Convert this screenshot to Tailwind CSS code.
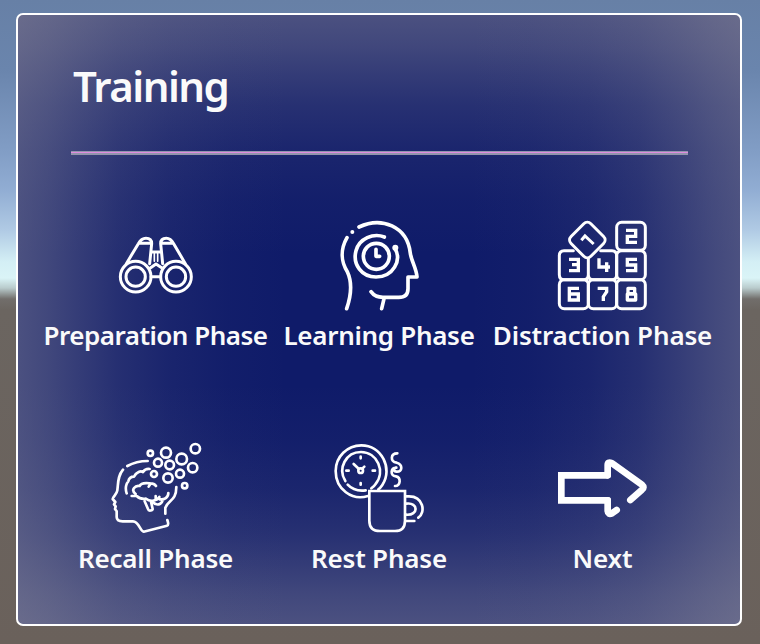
<!DOCTYPE html>
<html lang="en">
<head>
<meta charset="utf-8">
<title>Training</title>
<script src="https://cdn.jsdelivr.net/npm/@tailwindcss/browser@4"></script>
</head>
<body class="font-['Noto_Sans','Open_Sans',sans-serif] text-[#fafafa]">
<div class="h-[644px] w-[760px] overflow-hidden bg-[linear-gradient(to_bottom,#6780a6_0px,#6a85ad_70px,#819dc5_150px,#91add3_190px,#b0cae4_230px,#d4eff5_262px,#daf4f7_278px,#b9cbcc_288px,#716e6b_299px,#6b6560_310px,#6a615b_644px)] pt-[13px] pl-4">
  <main class="flex h-[613px] w-[726px] flex-col rounded-[7px] border-2 border-white bg-[#0f1b69] bg-[linear-gradient(to_right,#87869780_0px,#8786976a_30px,#87869750_60px,#87869730_100px,#87869717_150px,#87869707_210px,#87869700_270px,#87869700_452px,#87869707_512px,#87869717_572px,#87869730_622px,#87869750_662px,#8786976a_692px,#87869780_722px),linear-gradient(to_bottom,#87869780_0px,#8786976a_30px,#87869752_55px,#87869733_90px,#87869719_135px,#87869709_185px,#87869700_240px,#87869700_369px,#87869709_424px,#87869719_474px,#87869733_519px,#87869752_554px,#8786976a_579px,#87869780_609px)] px-[26px]">
    <header class="mx-[27px] mr-[26px] h-[136px] pt-[42px]">
      <h1 class="ml-[2px] text-[42px] leading-[58px] font-semibold tracking-[-1.5px]">Training</h1>
    </header>
    <div class="mr-[26px] ml-[27px] h-1 border-y border-[#9295ad] border-b-2 bg-[#e08be0]"></div>
    <section class="mt-[64px] grid grid-cols-[223px_224px_223px] gap-y-[41px]">
      <button class="flex flex-col items-center">
        <svg class="size-[90px] overflow-visible" viewBox="33 -3 270 270" fill="none" stroke="#fff" stroke-width="9" stroke-linejoin="round" stroke-linecap="round">
          <circle cx="107" cy="170" r="46"/><circle cx="107" cy="170" r="29"/>
          <circle cx="228" cy="170" r="46"/><circle cx="228" cy="170" r="29"/>
          <path d="M79 131l36-60c5-9 12-16 23-16 12 0 17 7 17 16l-6 60M122 70h26M256 131l-35-60c-5-9-12-16-22-16-12 0-17 7-17 16l6 60M214 70h-26M156 96h25M153 170h29M152 143l16-11 17 11"/>
          <path stroke-width="5" d="M163 100v24M173 100v24"/>
        </svg>
        <span class="mt-[5px] text-[26px] leading-[42px] font-semibold whitespace-nowrap tracking-[-0.5px]">Preparation Phase</span>
      </button>
      <button class="flex flex-col items-center">
        <svg class="size-[90px] overflow-visible" viewBox="42 27 270 270" fill="none" stroke="#fff" stroke-width="11" stroke-linejoin="round" stroke-linecap="round">
          <path d="M117 51C184 19 262 48 271 130c3 23 18 44 20 71h-27v35q0 26-28 26h-47q-24 0-36-17M193 262l-8 34M81 83C60 120 64 157 82 185c14 30 12 70-2 111"/>
          <circle cx="97" cy="66" r="6" fill="#fff" stroke="none"/>
          <circle cx="169" cy="139" r="39"/>
          <path d="M193 81c-33-13-75 5-85 41-11 42 18 79 60 79 51 0 79-50 56-87"/>
          <circle cx="226" cy="113" r="9" fill="#fff" stroke="none"/><path d="M168 118v21h11"/>
        </svg>
        <span class="mt-[5px] text-[26px] leading-[42px] font-semibold whitespace-nowrap tracking-[-0.3px]">Learning Phase</span>
      </button>
      <button class="flex flex-col items-center">
        <svg class="size-[90px] overflow-visible" viewBox="39 27 270 270" fill="none" stroke="#fff" stroke-width="9" stroke-linejoin="round" stroke-linecap="round">
          <rect x="215" y="37" width="86" height="84" rx="15"/>
          <path d="M85 122H57q-14 0-14 15v57q0 15 15 15h57q15 0 15-15v-49M167 122h34q14 0 14 15v57q0 15-15 15h-55q-15 0-15-15"/>
          <rect x="215" y="122" width="86" height="87" rx="15"/><rect x="43" y="209" width="87" height="87" rx="15"/><rect x="130" y="209" width="85" height="87" rx="15"/><rect x="215" y="209" width="86" height="87" rx="15"/>
          <rect x="85" y="48" width="84" height="84" rx="15" transform="rotate(45 127 90)"/>
          <g stroke-width="10" stroke-linejoin="miter" stroke-linecap="butt">
            <path stroke-width="9" d="M109 91l11-13 26 24"/>
            <path d="M243 61h29v18h-25v18h29M72 148h28v34H72M81 164h19M162 145v26h33M185 157v29M276 148h-29v17h25v17h-29M102 235H73v35h27v-18H73M158 235h27v10l-10 15v13"/>
            <path d="M249 235h20v16h-20zM247 252h25v18h-25z" stroke-linejoin="round"/>
          </g>
        </svg>
        <span class="mt-[5px] text-[26px] leading-[42px] font-semibold whitespace-nowrap tracking-[-0.15px]">Distraction Phase</span>
      </button>
      <button class="mt-[46px] flex flex-col items-center">
        <svg class="size-[90px] overflow-visible" viewBox="33 24 270 270" fill="none" stroke="#fff" stroke-width="8" stroke-linejoin="round" stroke-linecap="round">
          <path d="M82 93q27-15 61-15M69 104c-16 19-14 39-17 62-1 11-14 20-14 26l8 9-4 7 5 6-2 8 5 7v17c0 10 7 13 18 13h31c18 0 21 30 32 31l70-18c5-1 4-8 1-17M229 156c0 42-24 38-33 62v18"/>
          <path d="M80 175c-6-17 0-31 5-36 2-10 10-14 17-14 8-15 20-18 27-14 6-9 13-10 20-9M95 183h15c8 8 16 10 28 8 14 12 34 5 40-5M107 177c-17-13 0-27 12-24 4-12 21-9 32-8 7 0 13 2 17 8M151 147l-5 8M205 174c0 14-12 21-26 19M134 199l10 23c2 8 14 4 14 0l-5-22M158 201c12 13 27 8 30-6M167 183v12"/>
          <circle cx="151" cy="55" r="8"/><circle cx="198" cy="53" r="15"/><circle cx="286" cy="41" r="14"/><circle cx="174" cy="83" r="12"/><circle cx="245" cy="72" r="16"/><circle cx="209" cy="90" r="13"/><circle cx="278" cy="98" r="14"/><circle cx="162" cy="117" r="9"/><circle cx="240" cy="116" r="12"/><circle cx="204" cy="129" r="14"/><circle cx="254" cy="152" r="8"/>
        </svg>
        <span class="mt-[4px] text-[26px] leading-[42px] font-semibold whitespace-nowrap tracking-[-0.2px]">Recall Phase</span>
      </button>
      <button class="mt-[46px] flex flex-col items-center">
        <svg class="size-[90px] overflow-visible" viewBox="45 24 270 270" fill="none" stroke="#fff" stroke-width="8" stroke-linejoin="round" stroke-linecap="round">
          <path d="M147 183c-48 15-97-20-97-75 0-43 35-77 77-77 60 0 96 69 63 119-4 6-7 10-12 13"/>
          <path d="M79 138c-24-38 2-87 47-87 49 0 75 59 43 97-3 5-7 8-12 12M86 149c15 16 31 20 54 17"/>
          <circle cx="125" cy="107" r="7"/><path d="M119 101l-15-14M130 101l6-6" />
          <path d="M125 65v5M125 144v5M82 107h7M161 107h7"/>
          <path d="M151 168h107v89q0 31-30 31h-45q-32 0-32-31z" stroke-linejoin="miter"/>
          <path d="M260 184h10c43 0 51 48 28 64M262 206c37-5 37 36 0 33M262 258h24"/>
          <path d="M235 55c-21 0-22 25-2 28 19 5 18 28 0 27-10 0-10-12-1-12-18 1-19 24-1 26 16 3 14 30-3 29"/>
        </svg>
        <span class="mt-[4px] text-[26px] leading-[42px] font-semibold whitespace-nowrap tracking-[-0.2px]">Rest Phase</span>
      </button>
      <button class="mt-[46px] flex flex-col items-center">
        <svg class="size-[90px] overflow-visible" viewBox="39 24 270 270" fill="none" stroke="#fff" stroke-width="20" stroke-linejoin="round" stroke-linecap="round">
          <path stroke-linejoin="miter" d="M188 121H49v75h139"/>
          <path d="M188 121V90q0-11 12-6l91 65q9 8 0 15l-35 31M188 196v32q1 12 13 7l14-10"/>
        </svg>
        <span class="mt-[4px] text-[26px] leading-[42px] font-semibold whitespace-nowrap tracking-[-0.1px]">Next</span>
      </button>
    </section>
  </main>
</div>
</body>
</html>
